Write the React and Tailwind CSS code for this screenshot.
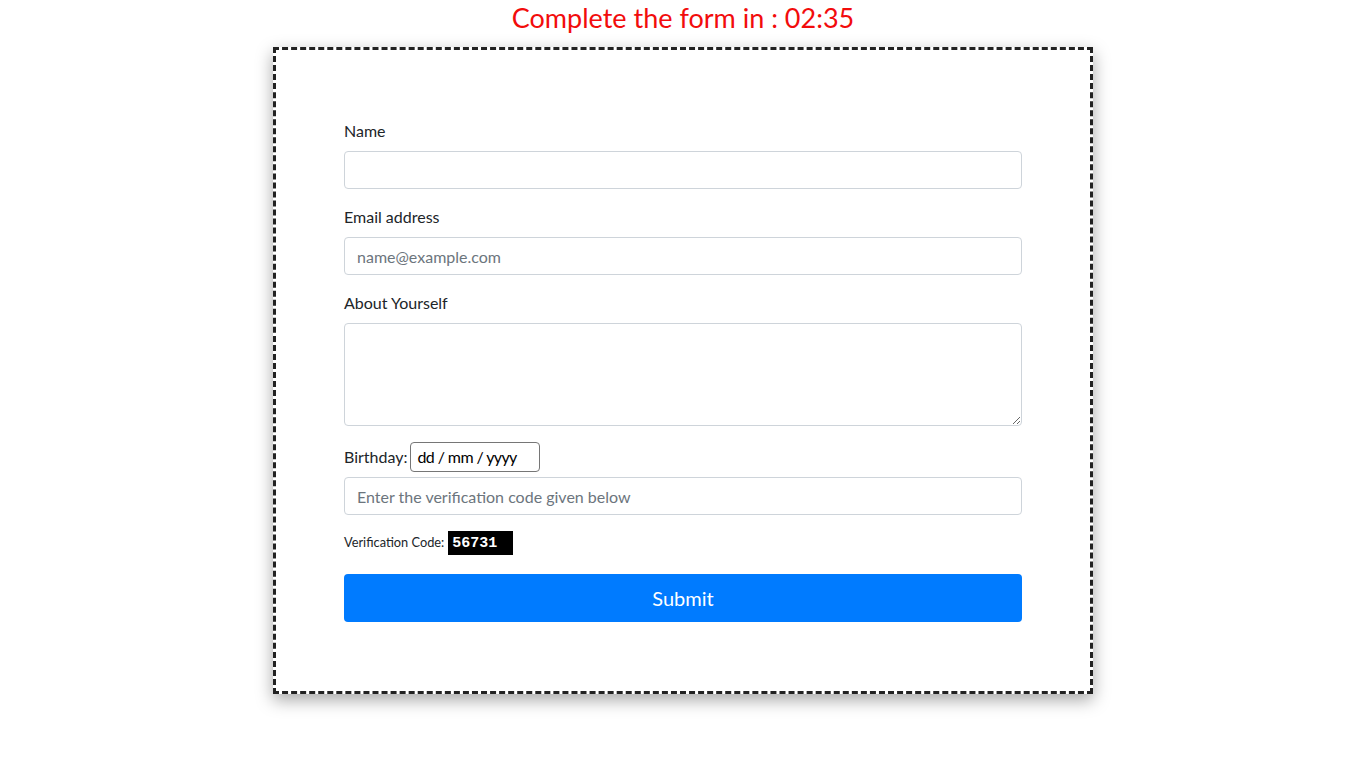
import { useState } from "react";

const App = () => {
  const [name, setName] = useState("");
  const [email, setEmail] = useState("");
  const [about, setAbout] = useState("");
  const [code, setCode] = useState("");

  const submitForm = (e) => {
    e.preventDefault();
  };

  return (
    <div
      className="min-h-screen bg-white text-[#212529]"
      style={{ fontFamily: "Lato, 'Open Sans', sans-serif" }}
    >
      <h1 className="text-center text-[27px] leading-[36px] text-[#f20c0c] font-normal">
        Complete the form in : 02:35
      </h1>
      <form
        onSubmit={submitForm}
        className="mx-auto mt-[11px] w-[820px] border-[3px] border-dashed border-[#222] bg-white px-[68px] pt-[69px] pb-[69px] shadow-[0_6px_16px_rgba(0,0,0,0.35)]"
      >
        <div className="mb-4">
          <label className="mb-2 block text-base leading-6">Name</label>
          <input
            type="text"
            value={name}
            onChange={(e) => setName(e.target.value)}
            className="block h-[38px] w-full rounded border border-[#ced4da] px-3 text-base focus:outline-none"
          />
        </div>
        <div className="mb-4">
          <label className="mb-2 block text-base leading-6">Email address</label>
          <input
            type="email"
            value={email}
            onChange={(e) => setEmail(e.target.value)}
            placeholder="name@example.com"
            className="block h-[38px] w-full rounded border border-[#ced4da] px-3 text-base placeholder:text-[#6c757d] focus:outline-none"
          />
        </div>
        <div className="mb-4">
          <label className="mb-2 block text-base leading-6">About Yourself</label>
          <textarea
            value={about}
            onChange={(e) => setAbout(e.target.value)}
            className="block h-[103px] w-full rounded border border-[#ced4da] px-3 py-1.5 text-base focus:outline-none"
          />
        </div>
        <div className="flex items-center gap-[3px] text-base">
          <span>Birthday:</span>
          <span className="flex h-[30px] w-[130px] items-center rounded-sm border border-[#767676] px-[6px] tracking-[-0.6px] text-black">
            dd / mm / yyyy
          </span>
        </div>
        <input
          type="text"
          value={code}
          onChange={(e) => setCode(e.target.value)}
          placeholder="Enter the verification code given below"
          className="mt-[5px] block h-[38px] w-full rounded border border-[#ced4da] px-3 text-base placeholder:text-[#6c757d] focus:outline-none"
        />
        <div className="mt-4 flex items-center gap-1 text-[12.8px]">
          <span>Verification Code:</span>
          <span
            className="flex h-6 w-[65px] items-center bg-black pl-1 pt-[3px] text-[15px] font-bold text-white"
            style={{ fontFamily: "'Liberation Mono', monospace" }}
          >
            56731
          </span>
        </div>
        <button
          type="submit"
          className="mt-[19px] block h-12 w-full rounded bg-[#007bff] text-xl text-white"
        >
          Submit
        </button>
      </form>
    </div>
  );
};

export default App;
